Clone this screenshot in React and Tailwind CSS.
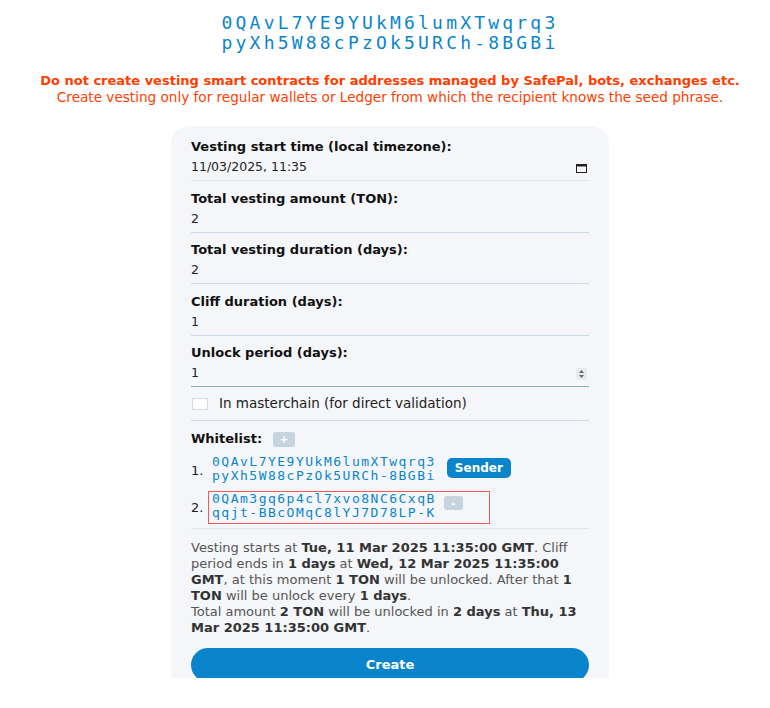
import { useState } from 'react';

const SANS = { fontFamily: '"DejaVu Sans", Verdana, sans-serif' };

function CalendarIcon() {
  return (
    <svg width="11" height="10" viewBox="0 0 11 10" className="shrink-0">
      <rect x="0.5" y="1.5" width="10" height="8" fill="none" stroke="#222" strokeWidth="1" />
      <rect x="0.5" y="1.5" width="10" height="2" fill="#222" />
    </svg>
  );
}

function Spinner() {
  return (
    <div className="flex h-[12px] w-[11px] flex-col items-center justify-center gap-[2px] rounded-[2px] bg-[#e6e9ee]">
      <svg width="5" height="3" viewBox="0 0 5 3"><path d="M0 3 L2.5 0 L5 3 Z" fill="#666" /></svg>
      <svg width="5" height="3" viewBox="0 0 5 3"><path d="M0 0 L2.5 3 L5 0 Z" fill="#666" /></svg>
    </div>
  );
}

function Field({ label, value, border = 'border-[#cbd9e5]', right = null, first = false }) {
  return (
    <div className={first ? 'shrink-0' : 'mt-[9.5px] shrink-0'}>
      <div className="h-[16px] text-[13px] font-bold leading-[16px] text-[#111]">{label}</div>
      <div className={`flex h-[26px] items-center justify-between border-b pr-[2px] ${border}`}>
        <span className="text-[12.5px] text-[#222]">{value}</span>
        {right}
      </div>
    </div>
  );
}

function Addr({ lines }) {
  return (
    <div
      className="text-[13px] leading-[14px] tracking-[1.5px] text-[#0a85cc]"
      style={{ fontFamily: '"DejaVu Sans Mono", monospace' }}
    >
      {lines.map((l) => (
        <div key={l}>{l}</div>
      ))}
    </div>
  );
}

export default function App() {
  const [master, setMaster] = useState(false);

  return (
    <div className="flex min-h-screen flex-col items-center bg-white pl-[10px]" style={SANS}>
      <div
        className="mt-[13px] text-center text-[18px] leading-[20px] tracking-[3.2px] text-[#0a85cc]"
        style={{ fontFamily: '"DejaVu Sans Mono", monospace' }}
      >
        <div>0QAvL7YE9YUkM6lumXTwqrq3</div>
        <div>pyXh5W88cPzOk5URCh-8BGBi</div>
      </div>

      <div className="mt-[20px] text-center text-[#ff3d00]">
        <div className="text-[13px] font-bold leading-[16px]">
          Do not create vesting smart contracts for addresses managed by SafePal, bots, exchanges etc.
        </div>
        <div className="text-[13.6px] leading-[16px]">
          Create vesting only for regular wallets or Ledger from which the recipient knows the seed phrase.
        </div>
      </div>

      <div className="mt-[21px] flex h-[552px] w-[438px] flex-col overflow-hidden rounded-t-[18px] bg-[#f4f6f9] px-[20px] pt-[13px]">
        <Field
          first
          label="Vesting start time (local timezone):"
          value="11/03/2025, 11:35"
          border="border-[#e3e6ea]"
          right={<CalendarIcon />}
        />
        <Field label="Total vesting amount (TON):" value="2" />
        <Field label="Total vesting duration (days):" value="2" />
        <Field label="Cliff duration (days):" value="1" />
        <Field label="Unlock period (days):" value="1" border="border-[#8cb0d2]" right={<Spinner />} />

        <label className="flex h-[34px] shrink-0 cursor-pointer items-center gap-[11px] border-b border-[#cbd9e5]">
          <span
            onClick={() => setMaster(!master)}
            className="ml-[1px] h-[12px] w-[16px] border border-[#d3dde6] bg-white"
          />
          <span className="text-[13.5px] text-[#222]">In masterchain (for direct validation)</span>
        </label>

        <div className="mt-[10px] flex h-[16px] shrink-0 items-center gap-[11px]">
          <span className="text-[13px] font-bold text-[#111]">Whitelist:</span>
          <button className="flex h-[15px] w-[22px] items-center justify-center rounded-[3px] bg-[#c6d4df] text-[11px] font-bold leading-none text-white">
            +
          </button>
        </div>

        <div className="mt-[7px] flex shrink-0 flex-col gap-[4px]">
          <div className="flex items-center">
            <span className="w-[17px] text-[13px] text-[#222]">1.</span>
            <div className="flex h-[33px] w-[282px] items-start gap-[11px] border border-transparent pl-[3px]">
              <Addr lines={['0QAvL7YE9YUkM6lumXTwqrq3', 'pyXh5W88cPzOk5URCh-8BGBi']} />
              <button className="mt-[3px] h-[20px] rounded-[5px] bg-[#0a85cc] px-[8px] text-[12px] font-bold text-white">
                Sender
              </button>
            </div>
          </div>
          <div className="flex items-center">
            <span className="w-[17px] text-[13px] text-[#222]">2.</span>
            <div className="flex h-[33px] w-[282px] items-start gap-[8px] border border-[#f25a5a] pl-[3px]">
              <Addr lines={['0QAm3gq6p4cl7xvo8NC6CxqB', 'qqjt-BBcOMqC8lYJ7D78LP-K']} />
              <button className="mt-[4px] flex h-[14px] w-[19px] items-center justify-center rounded-[3px] bg-[#c6d4df] text-[11px] font-bold leading-none text-white">
                -
              </button>
            </div>
          </div>
        </div>

        <div className="mt-[4px] shrink-0 border-b border-[#dfe5eb]" />

        <p className="mt-[11px] shrink-0 text-[13px] leading-[16px] text-[#555]">
          Vesting starts at <b className="text-[#333]">Tue, 11 Mar 2025 11:35:00 GMT</b>. Cliff period ends in{' '}
          <b className="text-[#333]">1 days</b> at <b className="text-[#333]">Wed, 12 Mar 2025 11:35:00 GMT</b>, at
          this moment <b className="text-[#333]">1 TON</b> will be unlocked. After that{' '}
          <b className="text-[#333]">1 TON</b> will be unlock every <b className="text-[#333]">1 days</b>.
          <br />
          Total amount <b className="text-[#333]">2 TON</b> will be unlocked in <b className="text-[#333]">2 days</b> at{' '}
          <b className="text-[#333]">Thu, 13 Mar 2025 11:35:00 GMT</b>.
        </p>

        <button className="mt-[12px] h-[34px] w-full shrink-0 rounded-full bg-[#0a85cc] text-[13px] font-bold text-white">
          Create
        </button>
      </div>
    </div>
  );
}
